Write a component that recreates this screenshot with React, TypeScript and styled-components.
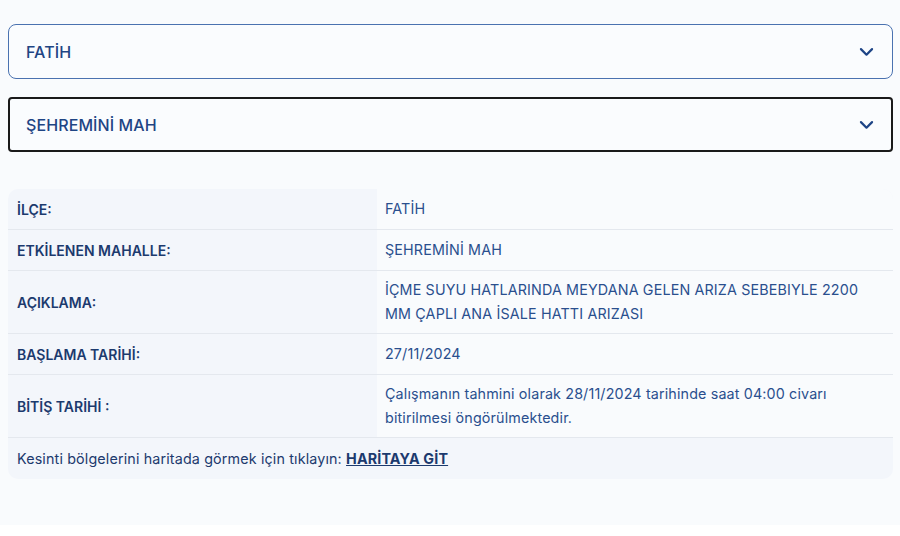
import styled, { createGlobalStyle } from 'styled-components';

const GlobalStyle = createGlobalStyle`
  html, body {
    margin: 0;
    padding: 0;
    background: #ffffff;
  }
  body {
    font-family: Inter, "Noto Sans", Arial, sans-serif;
  }
  * {
    box-sizing: border-box;
  }
`;

type Row = { label: string; value: string };

const rows: Row[] = [
  { label: 'İLÇE:', value: 'FATİH' },
  { label: 'ETKİLENEN MAHALLE:', value: 'ŞEHREMİNİ MAH' },
  {
    label: 'AÇIKLAMA:',
    value: 'İÇME SUYU HATLARINDA MEYDANA GELEN ARIZA SEBEBIYLE 2200 MM ÇAPLI ANA İSALE HATTI ARIZASI',
  },
  { label: 'BAŞLAMA TARİHİ:', value: '27/11/2024' },
  {
    label: 'BİTİŞ TARİHİ :',
    value: 'Çalışmanın tahmini olarak 28/11/2024 tarihinde saat 04:00 civarı bitirilmesi öngörülmektedir.',
  },
];

function Chevron() {
  return (
    <svg width="19" height="19" viewBox="0 0 24 24" fill="none">
      <path
        d="M5 9l7 7 7-7"
        stroke="#1d4486"
        strokeWidth="2.8"
        strokeLinecap="round"
        strokeLinejoin="round"
      />
    </svg>
  );
}

function App() {
  return (
    <>
      <GlobalStyle />
      <Page>
        <Select>
          <span>FATİH</span>
          <Chevron />
        </Select>
        <Select $focused>
          <span>ŞEHREMİNİ MAH</span>
          <Chevron />
        </Select>

        <InfoTable>
          {rows.map((r) => (
            <TableRow key={r.label}>
              <LabelCell>{r.label}</LabelCell>
              <ValueCell>{r.value}</ValueCell>
            </TableRow>
          ))}
          <Footer>
            Kesinti bölgelerini haritada görmek için tıklayın: <MapLink href="#">HARİTAYA GİT</MapLink>
          </Footer>
        </InfoTable>
      </Page>
    </>
  );
}

const Page = styled.main`
  background: #f9fbfd;
  height: 525px;
  padding: 24px 7px 0 8px;
  display: flex;
  flex-direction: column;
`;

const Select = styled.div<{ $focused?: boolean }>`
  height: 55px;
  display: flex;
  align-items: center;
  justify-content: space-between;
  padding: 0 ${(p) => (p.$focused ? 15 : 16)}px 0 ${(p) => (p.$focused ? 16 : 17)}px;
  background: #fafcfe;
  border: ${(p) => (p.$focused ? '2px solid #1a1a1a' : '1px solid #4a72b0')};
  border-radius: ${(p) => (p.$focused ? '4px' : '8px')};
  color: #1f4584;
  font-size: 16px;
  font-weight: 500;
  letter-spacing: 0.1px;
  margin-bottom: 18px;

  svg {
    display: block;
  }
`;

const InfoTable = styled.section`
  margin-top: 19px;
  background: #f3f6fb;
  border-radius: 10px;
  overflow: hidden;
`;

const TableRow = styled.div`
  display: grid;
  grid-template-columns: 369px 1fr;
  border-bottom: 1px solid #e4e8ee;
`;

const LabelCell = styled.div`
  display: flex;
  align-items: center;
  min-height: 40px;
  padding: 7px 9px;
  color: #1c3a6e;
  font-size: 14px;
  font-weight: 600;
`;

const ValueCell = styled.div`
  display: flex;
  align-items: center;
  min-height: 40px;
  padding: 7px 28px 7px 8px;
  background: #f9fbfd;
  color: #2a4f8e;
  font-size: 14.3px;
  letter-spacing: 0.15px;
  line-height: 24px;
`;

const Footer = styled.div`
  height: 41px;
  display: flex;
  align-items: center;
  padding: 0 9px;
  color: #1c3a6e;
  font-size: 14.3px;
  letter-spacing: 0.15px;
  white-space: pre;
`;

const MapLink = styled.a`
  color: #1c3a6e;
  font-weight: 700;
  text-decoration: underline;
`;

export default App;
